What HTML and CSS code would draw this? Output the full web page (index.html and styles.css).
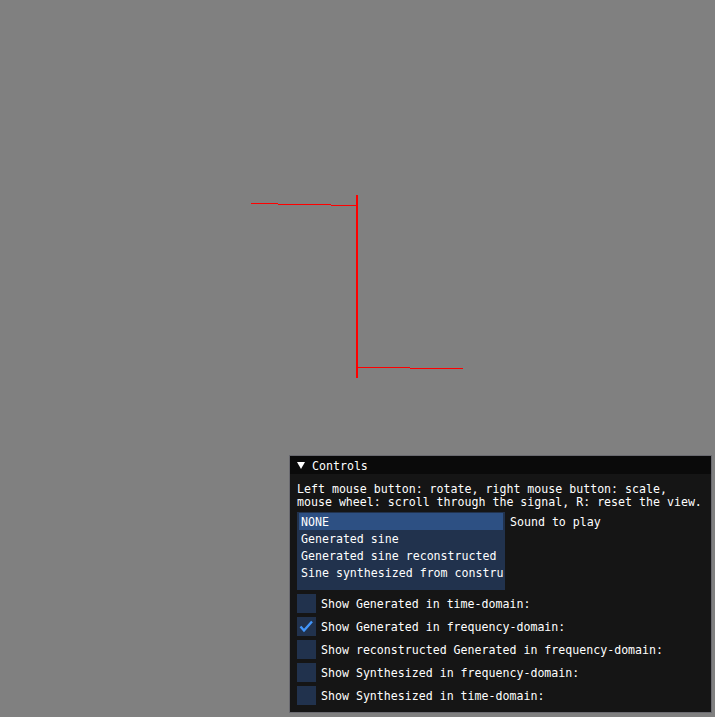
FILE: index.html
```html
<!DOCTYPE html>
<html lang="en">
<head>
    <meta charset="UTF-8">
    <title>Signal viewer</title>
    <link rel="stylesheet" href="styles.css">
</head>
<body>
    <div class="viewport">
        <!-- plot of the signal, drawn on the free canvas -->
        <svg class="plot" width="715" height="717" viewBox="0 0 715 717">
            <g stroke="#ff0000" stroke-width="1" fill="none" shape-rendering="crispEdges">
                <line x1="251" y1="203.5" x2="278" y2="203.5"/>
                <line x1="278" y1="204.5" x2="331" y2="204.5"/>
                <line x1="331" y1="205.5" x2="356" y2="205.5"/>
                <line x1="357" y1="195" x2="357" y2="378" stroke-width="2"/>
                <line x1="358" y1="367.5" x2="410" y2="367.5"/>
                <line x1="410" y1="368.5" x2="463" y2="368.5"/>
            </g>
        </svg>

        <div class="window">
            <div class="title-bar">
                <span class="collapse-arrow"></span>
                <span class="title">Controls</span>
            </div>
            <div class="window-body">
                <p class="help">Left mouse button: rotate, right mouse button: scale,<br>mouse wheel: scroll through the signal, R: reset the view.</p>

                <div class="list-row">
                    <div class="listbox">
                        <div class="list-item selected">NONE</div>
                        <div class="list-item">Generated sine</div>
                        <div class="list-item">Generated sine reconstructed</div>
                        <div class="list-item">Sine synthesized from constru</div>
                    </div>
                    <span class="list-label">Sound to play</span>
                </div>

                <div class="checks">
                    <label class="check-row"><span class="checkbox"></span><span class="check-text">Show Generated in time-domain:</span></label>
                    <label class="check-row">
                        <span class="checkbox">
                            <svg width="19" height="19" viewBox="0 0 19 19"><polyline points="3.5,9.5 7,13.5 15,4.5" fill="none" stroke="#4296fa" stroke-width="2.4"/></svg>
                        </span><span class="check-text">Show Generated in frequency-domain:</span>
                    </label>
                    <label class="check-row"><span class="checkbox"></span><span class="check-text">Show reconstructed Generated in frequency-domain:</span></label>
                    <label class="check-row"><span class="checkbox"></span><span class="check-text">Show Synthesized in frequency-domain:</span></label>
                    <label class="check-row"><span class="checkbox"></span><span class="check-text">Show Synthesized in time-domain:</span></label>
                </div>
            </div>
        </div>
    </div>
</body>
</html>
```

FILE: styles.css
```css
* {
    margin: 0;
    padding: 0;
    box-sizing: border-box;
}

body {
    background-color: #808080;
    color: #ffffff;
    font-family: "DejaVu Sans Mono", "Liberation Mono", monospace;
    font-size: 11.6px;
    line-height: 13px;
}

.viewport {
    position: relative;
    width: 715px;
    height: 717px;
    overflow: hidden;
}

.plot {
    position: absolute;
    top: 0;
    left: 0;
}

/* floating imgui style window */
.window {
    position: absolute;
    left: 289px;
    top: 455px;
    width: 423px;
    height: 258px;
    background-color: #151515;
    border: 1px solid #6a6a70;
}

.title-bar {
    display: flex;
    align-items: center;
    height: 18px;
    padding-left: 7px;
    padding-top: 2px;
    background-color: #0a0a0a;
}

.collapse-arrow {
    width: 0;
    height: 0;
    border-left: 4px solid transparent;
    border-right: 4px solid transparent;
    border-top: 7px solid #ffffff;
    margin-right: 7px;
    margin-top: -1px;
}

.window-body {
    padding: 9px 7px 8px;
    display: flex;
    flex-direction: column;
    gap: 4px;
}

.help {
    white-space: nowrap;
    height: 25px;
}

.list-row {
    display: flex;
    align-items: flex-start;
    gap: 5px;
}

.listbox {
    width: 208px;
    height: 78px;
    padding: 1px 2px;
    background-color: #21324d;
    overflow: hidden;
}

.list-item {
    height: 17px;
    line-height: 15px;
    padding-top: 2px;
    padding-left: 2px;
    white-space: nowrap;
}

.list-item.selected {
    background-color: #2d5083;
}

.list-label {
    padding-top: 4px;
}

.checks {
    display: flex;
    flex-direction: column;
    gap: 4px;
}

.check-row {
    display: flex;
    align-items: center;
    gap: 5px;
    height: 19px;
    white-space: nowrap;
}

.check-text {
    padding-top: 2px;
}

.checkbox {
    width: 19px;
    height: 19px;
    background-color: #21324d;
}

.checkbox svg {
    display: block;
}
```
